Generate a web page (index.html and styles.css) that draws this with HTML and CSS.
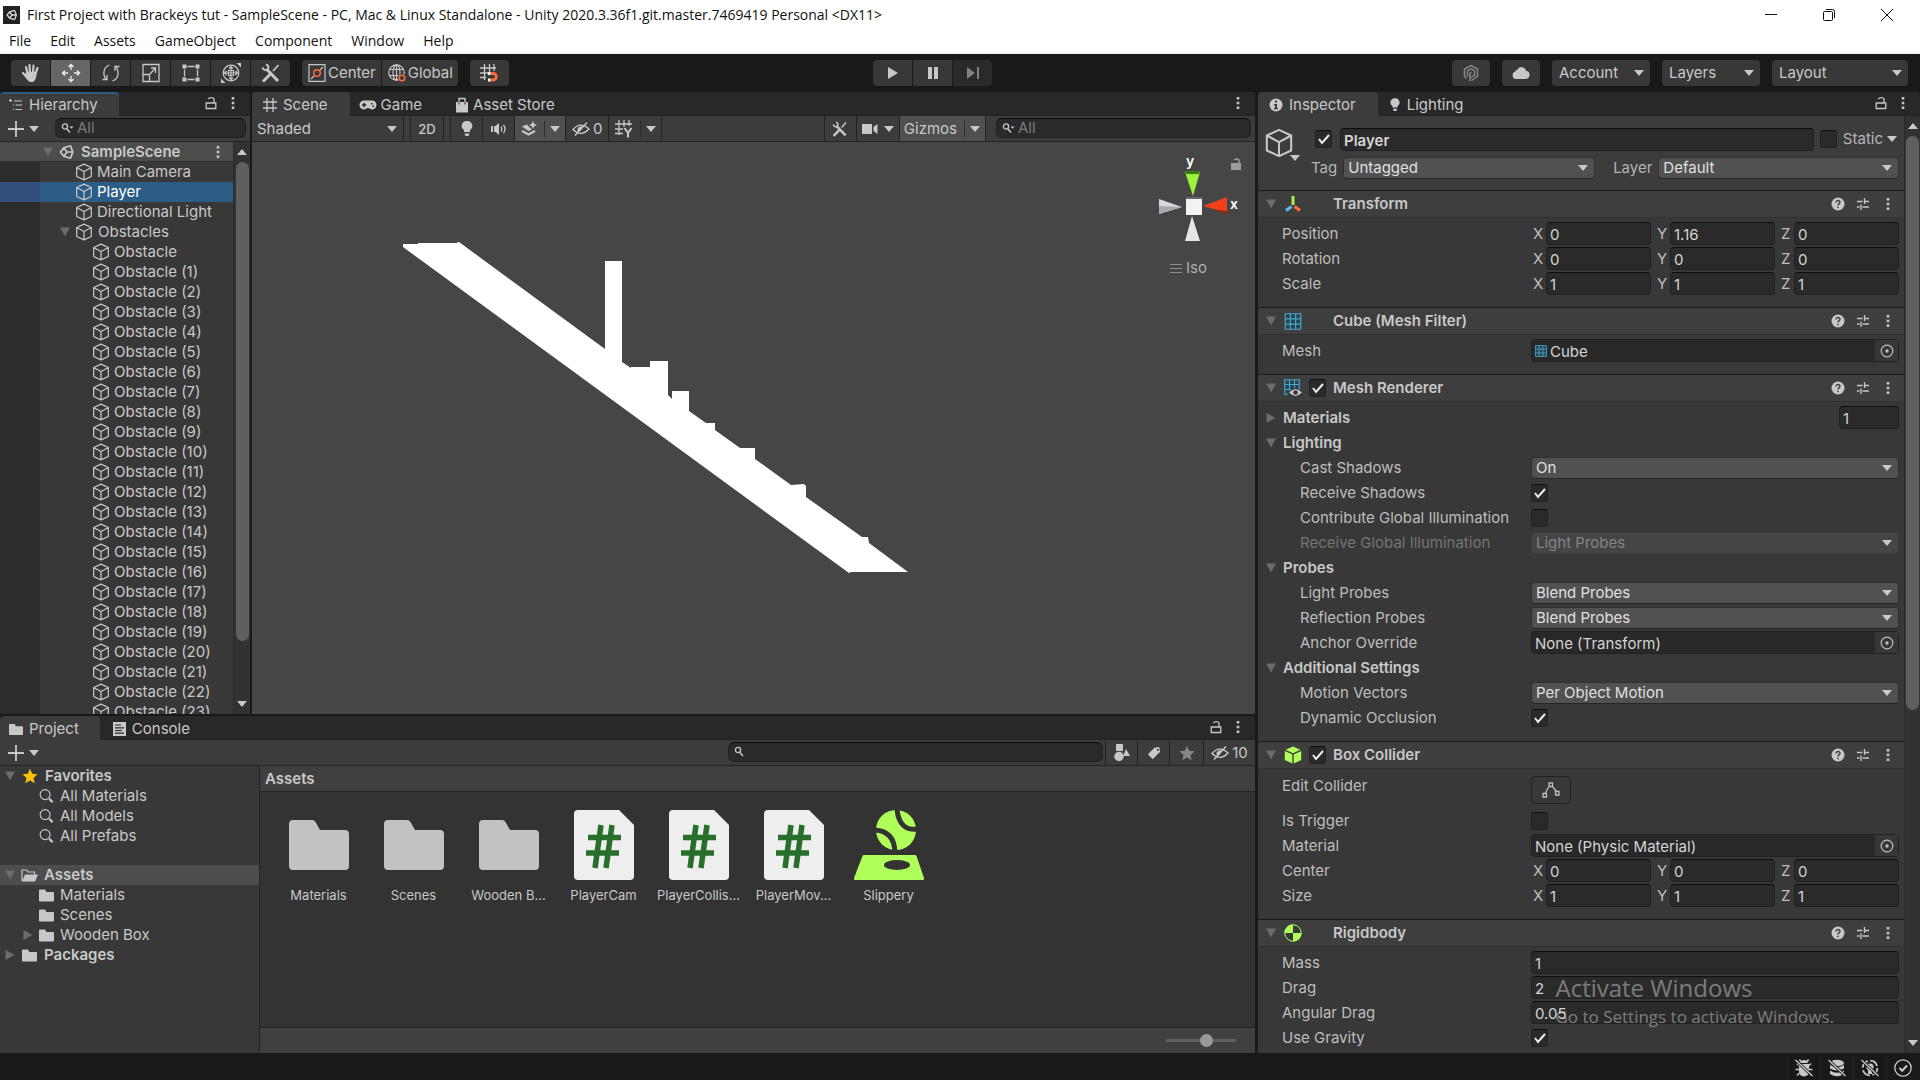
FILE: index.html
```html
<!DOCTYPE html>
<html lang="en">
<head>
    <meta charset="UTF-8">
    <meta name="viewport" content="width=device-width, initial-scale=1.0">
    <title>First Project with Brackeys tut - SampleScene</title>
    <link rel="stylesheet" href="styles.css">
</head>
<body>

    <!-- Icon set -->
    <svg class="defs" aria-hidden="true">
        <symbol id="i-unity" viewBox="0 0 16 16"><path fill="none" stroke="currentColor" stroke-width="1.700" d="M11.500 1.800 4.800 3.700 1.500 8l3.300 4.300 6.700 1.900M11.500 1.800 13.800 8l-2.300 6.200M8 8h5.500M8 8 4.800 3.700M8 8l-3.200 4.300"/></symbol>
        <symbol id="i-cube" viewBox="0 0 16 16"><path fill="none" stroke="currentColor" stroke-width="1.100" stroke-linejoin="round" d="M8 1 14.500 4v8L8 15 1.500 12V4zM1.500 4 8 7.500 14.500 4M8 7.500V15"/></symbol>
        <symbol id="i-hand" viewBox="0 0 20 20"><path fill="none" stroke="currentColor" stroke-width="2.200" stroke-linecap="round" d="M6.500 10 5 4M9 9.500 8.500 2M12 9.500 12.500 2.500M14.500 10.500 16.500 5M5.500 14 2 10"/><path fill="currentColor" d="M5.500 9h10.200c0 5-1.200 9-4 10H8.800C6 17 4.800 15 3.500 12z"/></symbol>
        <symbol id="i-move" viewBox="0 0 20 20"><path fill="none" stroke="currentColor" stroke-width="1.300" d="M10 1.500V7M10 13v5.500M1.500 10H7M13 10h5.500M7.500 4 10 1.500 12.500 4M7.500 16l2.500 2.500 2.500-2.500M4 7.500 1.500 10 4 12.500M16 7.500l2.500 2.500-2.500 2.500"/></symbol>
        <symbol id="i-rotate" viewBox="0 0 20 20"><path fill="none" stroke="currentColor" stroke-width="1.300" d="M8.500 2C3 4 1 10 5 16.500M1.500 16.500H6V12M11.500 18c5.500-2 7.500-8 3.500-14.500M18.500 3.500H14V8"/></symbol>
        <symbol id="i-scale" viewBox="0 0 20 20"><path fill="none" stroke="currentColor" stroke-width="1.300" d="M2 1.500h16v17H2zM2 11.500h6.500v7M9 11l5.500-6M10 5h4.500v5"/></symbol>
        <symbol id="i-rect" viewBox="0 0 20 20"><path fill="none" stroke="currentColor" stroke-width="1.300" d="M6.500 3.500h7M6.500 16.500h7M3.500 6.500v7M16.500 6.500v7"/><path fill="currentColor" d="M1.500 1.500h4v4h-4zM14.500 1.500h4v4h-4zM1.500 14.500h4v4h-4zM14.500 14.500h4v4h-4z"/></symbol>
        <symbol id="i-multi" viewBox="0 0 20 20"><circle cx="10" cy="10" r="7.800" fill="none" stroke="currentColor" stroke-width="1.200"/><path fill="none" stroke="currentColor" stroke-width="1.200" d="M10 3.500v13M3.500 10h13M8 5.500l2-2 2 2M8 14.500l2 2 2-2M5.500 8l-2 2 2 2M14.500 8l2 2-2 2M7.500 7.500h5v5h-5z"/><path fill="currentColor" d="M15.500 0H20v4.500zM0 15.500V20h4.500z"/></symbol>
        <symbol id="i-tools" viewBox="0 0 20 20"><path fill="none" stroke="currentColor" stroke-width="3" d="m5.500 6 11.500 12M9 11.500 2 18.500"/><path fill="none" stroke="currentColor" stroke-width="1.800" d="m12 8 5.500-6"/><path fill="none" stroke="currentColor" stroke-width="2" d="M1.500 4.500c1 3 4.500 3.500 5.500 1.500s0-4-2-4.500"/></symbol>
        <symbol id="i-pivot" viewBox="0 0 18 18"><path fill="none" stroke="currentColor" stroke-width="1.200" d="M1 .7h16v16.600H1zM3 15l3-3M12 6l3-3"/><circle cx="9" cy="9" r="3.300" fill="none" stroke="#ff6c3c" stroke-width="1.500"/></symbol>
        <symbol id="i-global" viewBox="0 0 18 18"><g fill="none" stroke="currentColor" stroke-width="1.200"><circle cx="8.500" cy="8.500" r="7.700"/><ellipse cx="8.500" cy="8.500" rx="3.500" ry="7.700"/><path d="M1.500 5.500h14M1.500 11.500h14M8.500 1v15"/></g><circle cx="14" cy="14" r="4" fill="#383838"/><circle cx="14" cy="14" r="2.800" fill="none" stroke="#ff6c3c" stroke-width="1.500"/></symbol>
        <symbol id="i-snap" viewBox="0 0 18 18"><path fill="none" stroke="currentColor" stroke-width="1.300" d="M4.500 0v16M9.500 0v9M14 0v7M0 4h16M0 9h8M0 13.500h6"/><path fill="none" stroke="#ff6c3c" stroke-width="2.800" d="M10.500 9.500h3a3.300 3.300 0 0 1 0 6.500h-3"/><path stroke="#fff" stroke-width="2.800" d="M8 9.500h2.500M8 16h2.500"/></symbol>
        <symbol id="i-play" viewBox="0 0 14 14"><path fill="currentColor" d="M2 1v12l10-6z"/></symbol>
        <symbol id="i-pause" viewBox="0 0 14 14"><path fill="currentColor" d="M2 1h4v12H2zM8 1h4v12H8z"/></symbol>
        <symbol id="i-step" viewBox="0 0 14 14"><path fill="currentColor" d="M1 1v12l8-6zM11 1h2v12h-2z"/></symbol>
        <symbol id="i-collab" viewBox="0 0 18 18"><path fill="none" stroke="currentColor" stroke-width="1.500" d="M4.500 14.500 2.500 12V5L9 1.500 15.500 5v7L9.500 16.500M5.500 12.500V6.800l3.500-2 3.500 2V11L9 13.500M8 17V9l1.500-1"/></symbol>
        <symbol id="i-cloud" viewBox="0 0 18 14"><path fill="currentColor" d="M4 13a3.800 3.800 0 0 1-.8-7.400A3.500 3.500 0 0 1 5.500 3.500 4.600 4.600 0 0 1 14 4.700 4.200 4.200 0 0 1 14 13z"/></symbol>
        <symbol id="i-list" viewBox="0 0 14 14"><path fill="none" stroke="currentColor" stroke-width="1.200" d="M0 2.500h3M5 3h8M4 7h1M6.500 7H13M4 11.500h1M6.500 11.500H13M1.500 1v3"/></symbol>
        <symbol id="i-lock" viewBox="0 0 12 14"><path fill="none" stroke="currentColor" stroke-width="1.300" d="M1.200 7h9.600v5.500H1.200zM9 7V3.200C9 1 3.500 1 3.500 3.200"/></symbol>
        <symbol id="i-dots" viewBox="0 0 4 14"><path fill="currentColor" d="M.7 1h2.600v2.600H.7zM.7 5.700h2.600v2.600H.7zM.7 10.400h2.600V13H.7z"/></symbol>
        <symbol id="i-grid" viewBox="0 0 14 14"><path fill="none" stroke="currentColor" stroke-width="1.300" d="M4 0v14M10 0v14M0 4h14M0 10h14"/></symbol>
        <symbol id="i-game" viewBox="0 0 18 12"><path fill="currentColor" fill-rule="evenodd" d="M5 1.500h8a4.500 4.500 0 0 1 0 9c-1.500 0-2.500-1.500-4-1.500s-2.500 1.500-4 1.500a4.500 4.500 0 0 1 0-9zM4.400 3.800v1.500H3v1.400h1.400v1.500h1.400V6.700h1.400V5.300H5.800V3.800zM12 4h1.500v1.500H12zM13.500 6.500H15V8h-1.500z"/></symbol>
        <symbol id="i-bag" viewBox="0 0 14 16"><path fill="currentColor" d="M1 5h12v10.500H1z"/><path fill="none" stroke="currentColor" stroke-width="1.400" d="M4 5V1.500h6V5"/><path fill="none" stroke="#282828" d="M4 5v2.500M10 5v2.500"/></symbol>
        <symbol id="i-plus" viewBox="0 0 16 16"><path fill="none" stroke="currentColor" stroke-width="1.800" d="M8 0v16M0 8h16"/></symbol>
        <symbol id="i-down" viewBox="0 0 10 6"><path fill="currentColor" d="M0 0h10L5 6z"/></symbol>
        <symbol id="i-up" viewBox="0 0 10 6"><path fill="currentColor" d="M0 6h10L5 0z"/></symbol>
        <symbol id="i-open" viewBox="0 0 10 10"><path fill="currentColor" d="M0 .5h10L5 9.500z"/></symbol>
        <symbol id="i-closed" viewBox="0 0 10 10"><path fill="currentColor" d="M.5 0v10l9-5z"/></symbol>
        <symbol id="i-find" viewBox="0 0 14 12"><circle cx="4" cy="4" r="2.600" fill="none" stroke="currentColor" stroke-width="1.300"/><path stroke="currentColor" stroke-width="1.500" d="m6 6.500 3 3.500"/></symbol>
        <symbol id="i-find-drop" viewBox="0 0 14 12"><circle cx="4" cy="4.500" r="2.600" fill="none" stroke="currentColor" stroke-width="1.300"/><path stroke="currentColor" stroke-width="1.500" d="m6 7 3 3.500"/><path fill="currentColor" d="M8.500 4.500h4l-2 2.200z"/></symbol>
        <symbol id="i-bulb" viewBox="0 0 14 16"><path fill="currentColor" d="M7 0a5 5 0 0 1 3 9.200V11H4V9.200A5 5 0 0 1 7 0zM4.500 12.500h5L8.500 15h-3z"/></symbol>
        <symbol id="i-sound" viewBox="0 0 16 14"><path fill="currentColor" d="M0 4h2v6H0zM3 4h1.500L8 1v12L4.500 10H3z"/><path fill="none" stroke="currentColor" stroke-width="1.300" d="M10 4.500q1.500 2.500 0 5M12.500 3q3 4 0 8"/></symbol>
        <symbol id="i-fx" viewBox="0 0 16 16"><path fill="currentColor" d="M12 0l1.200 2.800L16 4l-2.800 1.200L12 8l-1.200-2.800L8 4l2.800-1.200zM1 5.500l5-2 1.500 2L11 8.500 7.500 10z"/><path fill="none" stroke="currentColor" stroke-width="2" d="m1 10 6.500 3.500 6.500-3.500"/></symbol>
        <symbol id="i-hidden" viewBox="0 0 18 14"><path fill="none" stroke="currentColor" stroke-width="1.400" d="M1 7.500Q8.500-1 17 7 9 15.500 1 7.500zM3 13.500 15 .5"/><path fill="currentColor" d="M6 6a3.500 3.500 0 0 1 5-1L7 10.500A3.500 3.500 0 0 1 6 6z"/></symbol>
        <symbol id="i-gridy" viewBox="0 0 18 18"><path fill="none" stroke="currentColor" stroke-width="1.300" d="M4 0v15M9 0v7M14 0v6M0 4h17M0 9h8M0 13.500h8"/><path fill="none" stroke="currentColor" stroke-width="2" d="m9.500 8 3.500 5 3.500-5M13 12v5.500"/></symbol>
        <symbol id="i-camera" viewBox="0 0 16 12"><path fill="currentColor" d="M0 1h10v10H0zM11.500 4 15.500 1v10l-4-3z"/></symbol>
        <symbol id="i-info" viewBox="0 0 14 14"><circle cx="7" cy="7" r="6.500" fill="currentColor"/><path fill="#3c3c3c" d="M6 2.500h2v2H6zM5 6h3v4h1v1.300H5V10h1V7.200H5z"/></symbol>
        <symbol id="i-help" viewBox="0 0 14 14"><circle cx="7" cy="7" r="6.500" fill="currentColor"/><path fill="none" stroke="#3e3e3e" stroke-width="1.500" d="M5 5.500C5 2.700 9.300 3 9 5.300 8.900 6.500 7 6.800 7 8.500M7 9.700v1.600"/></symbol>
        <symbol id="i-preset" viewBox="0 0 14 14"><path fill="none" stroke="currentColor" stroke-width="1.300" d="M1 4.500h5.500M9 4.500h4M8.500 1v6M1 10h2.500M6.500 10H13M5 7.500V13"/></symbol>
        <symbol id="i-transform" viewBox="0 0 18 18"><path fill="none" stroke="#a6f24c" stroke-width="3" d="M9 1v9"/><path fill="none" stroke="#5fb8ea" stroke-width="3.200" d="m7.500 11.500-5.500 4"/><path fill="none" stroke="#ff6c3c" stroke-width="3.200" d="m10.500 11.500 5.500 4"/></symbol>
        <symbol id="i-mesh" viewBox="0 0 16 16"><path fill="#234653" d="M1 1h14v14H1z"/><path fill="none" stroke="#4fa6c9" stroke-width="1.100" d="M.7.700h14.600v14.600H.7zM5.500 1v14M10.500 1v14M1 5.500h14M1 10.500h14"/></symbol>
        <symbol id="i-render" viewBox="0 0 18 18"><path fill="#234653" d="M1 1h14v14H1z"/><path fill="none" stroke="#4fa6c9" stroke-width="1.100" d="M.7.700h14.600v14.600H.7zM5.500 1v14M10.500 1v14M1 5.500h14M1 10.500h14"/><path fill="#383838" d="M4 13.500Q11 4 18 13.500v4.500H4z"/><path fill="#c4c4c4" d="M5 13.500Q11.500 6.500 18 13.500q-6.500 7-13 0z"/><circle cx="11.500" cy="13.500" r="2.300" fill="#383838"/></symbol>
        <symbol id="i-box" viewBox="0 0 18 18"><path fill="#b0fe59" d="m9 .5 7.500 3.300L9 7.200 1.500 3.800zM.8 5l7.500 3.500v9L.8 14zM17.200 5 9.700 8.500v9l7.500-3.500z"/></symbol>
        <symbol id="i-rigid" viewBox="0 0 18 18"><circle cx="9" cy="9" r="8.200" fill="#383838" stroke="#b0fe59"/><path fill="#b0fe59" d="M9 9V.5A8.500 8.500 0 0 0 .5 9zM9 9v8.500A8.500 8.500 0 0 0 17.500 9z"/></symbol>
        <symbol id="i-edit" viewBox="0 0 18 16"><path fill="none" stroke="currentColor" stroke-width="1.300" d="M7 1h3.500v3.500H7zM1 11.500h3.500V15H1zM13.500 9.500H17V13h-3.500zM3 11.500 7 4.500M10.500 4.500 14.500 9.500"/></symbol>
        <symbol id="i-target" viewBox="0 0 14 14"><circle cx="7" cy="7" r="5.800" fill="none" stroke="currentColor" stroke-width="1.200"/><circle cx="7" cy="7" r="1.700" fill="currentColor"/></symbol>
        <symbol id="i-folder" viewBox="0 0 15 13"><path fill="currentColor" d="M0 1.500Q0 .5 1 .5h4.500q.8 0 1.200 1L7.200 3H14q1 0 1 1v7.500q0 1-1 1H1q-1 0-1-1z"/></symbol>
        <symbol id="i-folder-open" viewBox="0 0 17 13"><path fill="none" stroke="currentColor" stroke-width="1.200" d="M1 12V1h4.500L7 3h6.500v2.500"/><path fill="currentColor" d="M4 5.500h13L14 12.500H1z"/></symbol>
        <symbol id="i-console" viewBox="0 0 13 14"><path fill="currentColor" d="M0 0h13v14H0z"/><path stroke="#282828" stroke-width="1.200" d="M2 3h6M2 5.800h9M2 8.500h7M2 11.200h9"/></symbol>
        <symbol id="i-star" viewBox="0 0 16 16"><path fill="currentColor" d="m8 .8 2.200 5 5.300.5-4 3.600 1.200 5.300L8 12.400l-4.700 2.800 1.200-5.300-4-3.600 5.300-.5z"/></symbol>
        <symbol id="i-search" viewBox="0 0 16 16"><circle cx="6.500" cy="6.500" r="5.300" fill="none" stroke="currentColor" stroke-width="1.200"/><path stroke="currentColor" stroke-width="2.400" d="m11 11 3.500 3.700"/></symbol>
        <symbol id="i-types" viewBox="0 0 16 18"><path fill="currentColor" d="M2 0h7v7H2z"/><circle cx="5" cy="12.500" r="4.700" fill="currentColor"/><path fill="currentColor" d="M12 5l4 7H9z"/></symbol>
        <symbol id="i-tag" viewBox="0 0 16 16"><path fill="currentColor" fill-rule="evenodd" d="M8.500 2 14 1l1 5.500-8.500 8.500L1 9.500zM11.500 3.500v2h2v-2z"/></symbol>
        <symbol id="i-bigfolder" viewBox="0 0 70 70"><path fill="#c2c2c2" d="M5 14q0-4 4-4h19q2.500 0 3.500 2l4.500 8H61q4 0 4 4v32q0 4-4 4H9q-4 0-4-4z"/></symbol>
        <symbol id="i-script" viewBox="0 0 70 70"><path fill="#eee" d="M5 4q0-4 4-4h41l15 15v51q0 4-4 4H9q-4 0-4-4z"/><path fill="none" stroke="#276f2b" stroke-width="5.500" d="m32 15-6 43M43 15l-6 43M19 27.500h33M17 43h33"/></symbol>
        <symbol id="i-physic" viewBox="0 0 70 70"><circle cx="42" cy="20" r="20" fill="#b0fe59"/><path fill="none" stroke="#333" stroke-width="5" d="M43-1q2 23 22 20M21 20q19 1 20 22"/><path fill="#b0fe59" d="M10 45h51q1 0 1.500 1L70 68q.5 2-1.500 2h-67Q-.5 70 0 68l8.500-22q.500-1 1.500-1z"/><ellipse cx="43" cy="55" rx="13" ry="5" fill="#333"/></symbol>
        <symbol id="i-bug" viewBox="0 0 18 18"><path fill="currentColor" d="M5.500 4a3.500 3 0 0 1 7 0zM4 5h10v7q0 5-5 5.500-5-.5-5-5.500z"/><path fill="none" stroke="currentColor" stroke-width="1.500" d="M4.500 7 2 4.500M4 10.500H.5M4.500 14 2 16.500M13.500 7 16 4.500M14 10.500h3.500M13.500 14l2.500 2.500M6 3 4.500.5M12 3l1.500-2.500"/><path stroke="#191919" stroke-width="3" d="m.5 1 17 16"/><path stroke="currentColor" stroke-width="1.300" d="m.5 1 17 16"/></symbol>
        <symbol id="i-cache" viewBox="0 0 18 18"><ellipse cx="9" cy="4" rx="7" ry="3.300" fill="currentColor"/><path fill="currentColor" d="M2 6q7 4.500 14 0v3.500q-7 4-14 0zM2 11.500q7 4.500 14 0V15q-7 4.500-14 0z"/><path stroke="#191919" stroke-width="3" d="m.5 1 17 16"/><path stroke="currentColor" stroke-width="1.300" d="m.5 1 17 16"/></symbol>
        <symbol id="i-autolight" viewBox="0 0 18 18"><circle cx="9" cy="9" r="7.300" fill="none" stroke="currentColor" stroke-width="1.800" stroke-dasharray="9 2.500"/><circle cx="9" cy="8" r="3.600" fill="currentColor"/><path fill="currentColor" d="M7 11h4v4H7z"/><path stroke="#191919" stroke-width="3" d="m.5 1 17 16"/><path stroke="currentColor" stroke-width="1.300" d="m.5 1 17 16"/></symbol>
        <symbol id="i-ok" viewBox="0 0 18 18"><circle cx="9" cy="9" r="8.200" fill="none" stroke="currentColor" stroke-width="1.300"/><path fill="none" stroke="currentColor" stroke-width="2" d="m5.500 9 2.700 2.700L13 6.500"/></symbol>
    </svg>

    <!-- Window title and menus -->
    <header class="window">
        <div class="titlebar">
            <span class="app-icon"><svg width="12" height="12"><use href="#i-unity"/></svg></span>
            <h1>First Project with Brackeys tut - SampleScene - PC, Mac &amp; Linux Standalone - Unity 2020.3.36f1.git.master.7469419 Personal &lt;DX11&gt;</h1>
            <div class="window-buttons">
                <button aria-label="Minimize"><svg width="14" height="14"><path d="M1 6.500h12"/></svg></button>
                <button aria-label="Restore"><svg width="14" height="14"><path d="M1.500 4.500q0-1 1-1h7q1 0 1 1v7q0 1-1 1h-7q-1 0-1-1zM4 1.500h6.500q2 0 2 2V10"/></svg></button>
                <button aria-label="Close"><svg width="14" height="14"><path d="m1 1 12 12M13 1 1 13"/></svg></button>
            </div>
        </div>
        <nav class="menubar">
            <button>File</button>
            <button>Edit</button>
            <button>Assets</button>
            <button>GameObject</button>
            <button>Component</button>
            <button>Window</button>
            <button>Help</button>
        </nav>
    </header>

    <!-- Main toolbar -->
    <div class="toolbar">
        <div class="toolbar-left">
            <div class="button-group tools">
                <button aria-label="Hand"><svg width="20" height="20"><use href="#i-hand"/></svg></button>
                <button aria-label="Move" class="active"><svg width="20" height="20"><use href="#i-move"/></svg></button>
                <button aria-label="Rotate"><svg width="20" height="20"><use href="#i-rotate"/></svg></button>
                <button aria-label="Scale"><svg width="20" height="20"><use href="#i-scale"/></svg></button>
                <button aria-label="Rect"><svg width="20" height="20"><use href="#i-rect"/></svg></button>
                <button aria-label="Transform"><svg width="20" height="20"><use href="#i-multi"/></svg></button>
                <button aria-label="Custom tools"><svg width="20" height="20"><use href="#i-tools"/></svg></button>
            </div>
            <div class="button-group pivots">
                <button><svg width="18" height="18"><use href="#i-pivot"/></svg>Center</button>
                <button><svg width="18" height="18"><use href="#i-global"/></svg>Global</button>
            </div>
            <div class="button-group tools">
                <button aria-label="Grid snapping"><svg width="18" height="18"><use href="#i-snap"/></svg></button>
            </div>
        </div>
        <div class="button-group tools">
            <button aria-label="Play"><svg width="14" height="14"><use href="#i-play"/></svg></button>
            <button aria-label="Pause"><svg width="14" height="14"><use href="#i-pause"/></svg></button>
            <button aria-label="Step" disabled><svg width="14" height="14"><use href="#i-step"/></svg></button>
        </div>
        <div class="toolbar-right">
            <button class="service dim" aria-label="Collab"><svg width="18" height="18"><use href="#i-collab"/></svg></button>
            <button class="service" aria-label="Cloud"><svg width="18" height="14"><use href="#i-cloud"/></svg></button>
            <select class="drop" aria-label="Account"><option>Account</option></select>
            <select class="drop" aria-label="Layers"><option>Layers</option></select>
            <select class="drop layout" aria-label="Layout"><option>Layout</option></select>
        </div>
    </div>

    <main class="editor">

        <!-- Hierarchy -->
        <section class="panel hierarchy">
            <div class="tabs">
                <button class="tab current focused"><svg width="14" height="14"><use href="#i-list"/></svg>Hierarchy</button>
                <div class="tab-icons">
                    <button aria-label="Lock"><svg width="12" height="14"><use href="#i-lock"/></svg></button>
                    <button aria-label="Options"><svg width="4" height="14"><use href="#i-dots"/></svg></button>
                </div>
            </div>
            <div class="bar">
                <button class="add" aria-label="Create"><svg width="16" height="16"><use href="#i-plus"/></svg><svg width="10" height="6"><use href="#i-down"/></svg></button>
                <label class="search"><svg width="14" height="12"><use href="#i-find-drop"/></svg><input type="text" placeholder="All" aria-label="Search hierarchy"></label>
            </div>
            <div class="scroll-area">
                <ul class="tree scene-tree">
                    <li class="scene-row"><svg class="fold" width="10" height="10"><use href="#i-open"/></svg><svg width="16" height="16"><use href="#i-unity"/></svg><b>SampleScene</b><svg class="end" width="4" height="14"><use href="#i-dots"/></svg></li>
                    <li><svg width="18" height="18"><use href="#i-cube"/></svg>Main Camera</li>
                    <li class="selected"><svg width="18" height="18"><use href="#i-cube"/></svg>Player</li>
                    <li><svg width="18" height="18"><use href="#i-cube"/></svg>Directional Light</li>
                    <li class="parent"><svg class="fold" width="10" height="10"><use href="#i-open"/></svg><svg width="18" height="18"><use href="#i-cube"/></svg>Obstacles</li>
                    <li class="child"><svg width="18" height="18"><use href="#i-cube"/></svg>Obstacle</li>
                    <li class="child"><svg width="18" height="18"><use href="#i-cube"/></svg>Obstacle (1)</li>
                    <li class="child"><svg width="18" height="18"><use href="#i-cube"/></svg>Obstacle (2)</li>
                    <li class="child"><svg width="18" height="18"><use href="#i-cube"/></svg>Obstacle (3)</li>
                    <li class="child"><svg width="18" height="18"><use href="#i-cube"/></svg>Obstacle (4)</li>
                    <li class="child"><svg width="18" height="18"><use href="#i-cube"/></svg>Obstacle (5)</li>
                    <li class="child"><svg width="18" height="18"><use href="#i-cube"/></svg>Obstacle (6)</li>
                    <li class="child"><svg width="18" height="18"><use href="#i-cube"/></svg>Obstacle (7)</li>
                    <li class="child"><svg width="18" height="18"><use href="#i-cube"/></svg>Obstacle (8)</li>
                    <li class="child"><svg width="18" height="18"><use href="#i-cube"/></svg>Obstacle (9)</li>
                    <li class="child"><svg width="18" height="18"><use href="#i-cube"/></svg>Obstacle (10)</li>
                    <li class="child"><svg width="18" height="18"><use href="#i-cube"/></svg>Obstacle (11)</li>
                    <li class="child"><svg width="18" height="18"><use href="#i-cube"/></svg>Obstacle (12)</li>
                    <li class="child"><svg width="18" height="18"><use href="#i-cube"/></svg>Obstacle (13)</li>
                    <li class="child"><svg width="18" height="18"><use href="#i-cube"/></svg>Obstacle (14)</li>
                    <li class="child"><svg width="18" height="18"><use href="#i-cube"/></svg>Obstacle (15)</li>
                    <li class="child"><svg width="18" height="18"><use href="#i-cube"/></svg>Obstacle (16)</li>
                    <li class="child"><svg width="18" height="18"><use href="#i-cube"/></svg>Obstacle (17)</li>
                    <li class="child"><svg width="18" height="18"><use href="#i-cube"/></svg>Obstacle (18)</li>
                    <li class="child"><svg width="18" height="18"><use href="#i-cube"/></svg>Obstacle (19)</li>
                    <li class="child"><svg width="18" height="18"><use href="#i-cube"/></svg>Obstacle (20)</li>
                    <li class="child"><svg width="18" height="18"><use href="#i-cube"/></svg>Obstacle (21)</li>
                    <li class="child"><svg width="18" height="18"><use href="#i-cube"/></svg>Obstacle (22)</li>
                    <li class="child"><svg width="18" height="18"><use href="#i-cube"/></svg>Obstacle (23)</li>
                </ul>
                <div class="scrollbar">
                    <svg width="10" height="6"><use href="#i-up"/></svg>
                    <div class="track"><div class="thumb"></div></div>
                    <svg width="10" height="6"><use href="#i-down"/></svg>
                </div>
            </div>
        </section>

        <!-- Scene view -->
        <section class="panel scene">
            <div class="tabs">
                <button class="tab current"><svg width="14" height="14"><use href="#i-grid"/></svg>Scene</button>
                <button class="tab"><svg width="18" height="12"><use href="#i-game"/></svg>Game</button>
                <button class="tab"><svg width="14" height="16"><use href="#i-bag"/></svg>Asset Store</button>
                <div class="tab-icons">
                    <button aria-label="Options"><svg width="4" height="14"><use href="#i-dots"/></svg></button>
                </div>
            </div>
            <div class="bar scene-bar">
                <select class="shading" aria-label="Draw mode"><option>Shaded</option></select>
                <button class="cell mode">2D</button>
                <button class="cell" aria-label="Scene lighting"><svg width="14" height="16"><use href="#i-bulb"/></svg></button>
                <button class="cell" aria-label="Scene audio"><svg width="16" height="14"><use href="#i-sound"/></svg></button>
                <button class="cell split active" aria-label="Effects"><svg width="16" height="16"><use href="#i-fx"/></svg><svg class="arrow" width="10" height="6"><use href="#i-down"/></svg></button>
                <button class="cell hidden-count"><svg width="18" height="14"><use href="#i-hidden"/></svg>0</button>
                <button class="cell split" aria-label="Grid"><svg width="18" height="18"><use href="#i-gridy"/></svg><svg class="arrow" width="10" height="6"><use href="#i-down"/></svg></button>
                <span class="space"></span>
                <button class="cell" aria-label="Component tools"><svg width="16" height="16"><use href="#i-tools"/></svg></button>
                <button class="cell camera" aria-label="Camera"><svg width="16" height="12"><use href="#i-camera"/></svg><svg width="10" height="6"><use href="#i-down"/></svg></button>
                <button class="cell split gizmos active">Gizmos<svg class="arrow" width="10" height="6"><use href="#i-down"/></svg></button>
                <label class="search"><svg width="14" height="12"><use href="#i-find-drop"/></svg><input type="text" placeholder="All" aria-label="Search scene"></label>
            </div>
            <div class="viewport">
                <svg class="level" viewBox="0 0 1003 572">
                    <path fill="#fff" d="M151 102h15v-1h38l3-1 146 107v-88h17v101l9 6v-1h19v-6h18v34l4 4v-8h17v20l17 12h9v7l25 18h15v11l36 26 13-1 2 2v11l56 40h6l1 6 39 29h-57l-2 1L151 105z"/>
                </svg>
                <div class="gizmo">
                    <svg width="100" height="94" viewBox="1150 150 100 94">
                        <g class="axis-names"><text x="1186" y="166">y</text><text x="1230" y="209">x</text></g>
                        <path fill="#9af23c" d="M1185 172h15l-7 24z"/>
                        <path fill="#3c7a18" d="M1185 171h15l-1 3h-13z"/>
                        <path fill="#d8d8dc" d="M1159 199v15l23-7z"/>
                        <path fill="#a9a9b0" d="M1159 206v8l23-7z"/>
                        <path fill="#f0411c" d="M1227 197v16l-24-7z"/>
                        <path fill="#9c2008" d="M1228 209v5l-17-5 16 2z"/>
                        <path fill="#e6e6e8" d="M1192 216l8 25h-15z"/>
                        <path fill="#66666e" d="M1186 197h16v2h-16z"/>
                        <path fill="#f2f2f2" d="M1186 199h16v16h-16z"/>
                        <path fill="#9c9c9c" d="M1231 163h10v7h-10z"/>
                        <path fill="none" stroke="#9c9c9c" stroke-width="1.500" d="M1239 163v-3q-2-2-5 0"/>
                    </svg>
                    <button class="projection"><svg width="12" height="10"><path stroke="#8c8c8c" stroke-width="1" d="M0 1.500h12M0 5.500h12M0 9.500h12"/></svg>Iso</button>
                </div>
            </div>
        </section>

        <!-- Project browser -->
        <section class="panel project">
            <div class="tabs">
                <button class="tab current"><svg width="14" height="13"><use href="#i-folder"/></svg>Project</button>
                <button class="tab"><svg width="13" height="14"><use href="#i-console"/></svg>Console</button>
                <div class="tab-icons">
                    <button aria-label="Lock"><svg width="12" height="14"><use href="#i-lock"/></svg></button>
                    <button aria-label="Options"><svg width="4" height="14"><use href="#i-dots"/></svg></button>
                </div>
            </div>
            <div class="bar project-bar">
                <button class="add" aria-label="Create"><svg width="16" height="16"><use href="#i-plus"/></svg><svg width="10" height="6"><use href="#i-down"/></svg></button>
                <label class="search"><svg width="14" height="12"><use href="#i-find"/></svg><input type="text" aria-label="Search project"></label>
                <button class="cell" aria-label="Search by type"><svg width="16" height="18"><use href="#i-types"/></svg></button>
                <button class="cell" aria-label="Search by label"><svg width="14" height="14"><use href="#i-tag"/></svg></button>
                <button class="cell dim" aria-label="Save search"><svg width="16" height="16"><use href="#i-star"/></svg></button>
                <button class="cell hidden-count"><svg width="18" height="14"><use href="#i-hidden"/></svg>10</button>
            </div>
            <div class="project-body">
                <ul class="tree folders">
                    <li><svg class="fold" width="10" height="10"><use href="#i-open"/></svg><svg class="fav" width="16" height="16"><use href="#i-star"/></svg><b>Favorites</b></li>
                    <li class="sub"><svg width="15" height="16"><use href="#i-search"/></svg>All Materials</li>
                    <li class="sub"><svg width="15" height="16"><use href="#i-search"/></svg>All Models</li>
                    <li class="sub"><svg width="15" height="16"><use href="#i-search"/></svg>All Prefabs</li>
                    <li class="root"><svg class="fold" width="10" height="10"><use href="#i-open"/></svg><svg width="17" height="13"><use href="#i-folder-open"/></svg><b>Assets</b></li>
                    <li class="sub"><svg width="15" height="13"><use href="#i-folder"/></svg>Materials</li>
                    <li class="sub"><svg width="15" height="13"><use href="#i-folder"/></svg>Scenes</li>
                    <li class="sub foldable"><svg class="fold" width="10" height="10"><use href="#i-closed"/></svg><svg width="15" height="13"><use href="#i-folder"/></svg>Wooden Box</li>
                    <li><svg class="fold" width="10" height="10"><use href="#i-closed"/></svg><svg width="15" height="13"><use href="#i-folder"/></svg><b>Packages</b></li>
                </ul>
                <div class="browser">
                    <h2>Assets</h2>
                    <ul class="assets">
                        <li><svg width="70" height="70"><use href="#i-bigfolder"/></svg>Materials</li>
                        <li><svg width="70" height="70"><use href="#i-bigfolder"/></svg>Scenes</li>
                        <li><svg width="70" height="70"><use href="#i-bigfolder"/></svg>Wooden B...</li>
                        <li><svg width="70" height="70"><use href="#i-script"/></svg>PlayerCam</li>
                        <li><svg width="70" height="70"><use href="#i-script"/></svg>PlayerCollis...</li>
                        <li><svg width="70" height="70"><use href="#i-script"/></svg>PlayerMov...</li>
                        <li><svg width="70" height="70"><use href="#i-physic"/></svg>Slippery</li>
                    </ul>
                    <footer><input type="range" min="0" max="100" value="60" aria-label="Icon size"></footer>
                </div>
            </div>
        </section>

        <!-- Inspector -->
        <section class="panel inspector">
            <div class="tabs">
                <button class="tab current"><svg width="14" height="14"><use href="#i-info"/></svg>Inspector</button>
                <button class="tab"><svg width="12" height="16"><use href="#i-bulb"/></svg>Lighting</button>
                <div class="tab-icons">
                    <button aria-label="Lock"><svg width="12" height="14"><use href="#i-lock"/></svg></button>
                    <button aria-label="Options"><svg width="4" height="14"><use href="#i-dots"/></svg></button>
                </div>
            </div>
            <div class="scroll-area">
                <div class="components">
                    <div class="object-head">
                        <button class="object-icon" aria-label="Select icon"><svg width="30" height="30"><use href="#i-cube"/></svg><svg class="corner" width="10" height="6"><use href="#i-down"/></svg></button>
                        <div class="object-rows">
                            <div class="object-row">
                                <input type="checkbox" aria-label="Enabled" checked>
                                <input type="text" class="object-name" value="Player" aria-label="Name">
                                <input type="checkbox" id="static">
                                <label for="static">Static</label><svg width="10" height="6"><use href="#i-down"/></svg>
                            </div>
                            <div class="object-row tag-row">
                                <label for="tag">Tag</label>
                                <select id="tag" class="tag-select"><option>Untagged</option></select>
                                <label for="layer">Layer</label>
                                <select id="layer" class="layer-select"><option>Default</option></select>
                            </div>
                        </div>
                    </div>

                    <article class="component">
                        <header><svg class="fold" width="10" height="10"><use href="#i-open"/></svg><svg width="18" height="18"><use href="#i-transform"/></svg><h3>Transform</h3>
                            <button aria-label="Help"><svg width="14" height="14"><use href="#i-help"/></svg></button><button aria-label="Presets"><svg width="14" height="14"><use href="#i-preset"/></svg></button><button aria-label="More"><svg width="4" height="14"><use href="#i-dots"/></svg></button></header>
                        <div class="row"><span>Position</span>
                            <div class="vector"><label>X<input type="text" value="0"></label><label>Y<input type="text" value="1.16"></label><label>Z<input type="text" value="0"></label></div></div>
                        <div class="row"><span>Rotation</span>
                            <div class="vector"><label>X<input type="text" value="0"></label><label>Y<input type="text" value="0"></label><label>Z<input type="text" value="0"></label></div></div>
                        <div class="row"><span>Scale</span>
                            <div class="vector"><label>X<input type="text" value="1"></label><label>Y<input type="text" value="1"></label><label>Z<input type="text" value="1"></label></div></div>
                    </article>

                    <article class="component">
                        <header><svg class="fold" width="10" height="10"><use href="#i-open"/></svg><svg width="18" height="17"><use href="#i-mesh"/></svg><h3>Cube (Mesh Filter)</h3>
                            <button aria-label="Help"><svg width="14" height="14"><use href="#i-help"/></svg></button><button aria-label="Presets"><svg width="14" height="14"><use href="#i-preset"/></svg></button><button aria-label="More"><svg width="4" height="14"><use href="#i-dots"/></svg></button></header>
                        <div class="row"><label for="mesh">Mesh</label>
                            <div class="object-field"><svg width="12" height="12"><use href="#i-mesh"/></svg><input type="text" id="mesh" value="Cube" readonly><button aria-label="Pick mesh"><svg width="14" height="14"><use href="#i-target"/></svg></button></div></div>
                    </article>

                    <article class="component">
                        <header><svg class="fold" width="10" height="10"><use href="#i-open"/></svg><svg width="18" height="18"><use href="#i-render"/></svg><input type="checkbox" aria-label="Mesh Renderer enabled" checked><h3>Mesh Renderer</h3>
                            <button aria-label="Help"><svg width="14" height="14"><use href="#i-help"/></svg></button><button aria-label="Presets"><svg width="14" height="14"><use href="#i-preset"/></svg></button><button aria-label="More"><svg width="4" height="14"><use href="#i-dots"/></svg></button></header>
                        <div class="row group"><svg class="fold" width="10" height="10"><use href="#i-closed"/></svg><label for="materials">Materials</label><input type="text" id="materials" class="count" value="1"></div>
                        <div class="row group"><svg class="fold" width="10" height="10"><use href="#i-open"/></svg><span>Lighting</span></div>
                        <div class="row nested"><label for="cast">Cast Shadows</label><select id="cast"><option>On</option></select></div>
                        <div class="row nested"><label for="receive">Receive Shadows</label><input type="checkbox" id="receive" checked></div>
                        <div class="row nested"><label for="contribute">Contribute Global Illumination</label><input type="checkbox" id="contribute"></div>
                        <div class="row nested off"><label for="gi">Receive Global Illumination</label><select id="gi" disabled><option>Light Probes</option></select></div>
                        <div class="row group"><svg class="fold" width="10" height="10"><use href="#i-open"/></svg><span>Probes</span></div>
                        <div class="row nested"><label for="light-probes">Light Probes</label><select id="light-probes"><option>Blend Probes</option></select></div>
                        <div class="row nested"><label for="reflection">Reflection Probes</label><select id="reflection"><option>Blend Probes</option></select></div>
                        <div class="row nested"><label for="anchor">Anchor Override</label>
                            <div class="object-field"><input type="text" id="anchor" value="None (Transform)" readonly><button aria-label="Pick transform"><svg width="14" height="14"><use href="#i-target"/></svg></button></div></div>
                        <div class="row group"><svg class="fold" width="10" height="10"><use href="#i-open"/></svg><span>Additional Settings</span></div>
                        <div class="row nested"><label for="motion">Motion Vectors</label><select id="motion"><option>Per Object Motion</option></select></div>
                        <div class="row nested"><label for="occlusion">Dynamic Occlusion</label><input type="checkbox" id="occlusion" checked></div>
                    </article>

                    <article class="component">
                        <header><svg class="fold" width="10" height="10"><use href="#i-open"/></svg><svg width="18" height="18"><use href="#i-box"/></svg><input type="checkbox" aria-label="Box Collider enabled" checked><h3>Box Collider</h3>
                            <button aria-label="Help"><svg width="14" height="14"><use href="#i-help"/></svg></button><button aria-label="Presets"><svg width="14" height="14"><use href="#i-preset"/></svg></button><button aria-label="More"><svg width="4" height="14"><use href="#i-dots"/></svg></button></header>
                        <div class="row edit-row"><label for="edit">Edit Collider</label><button id="edit" class="edit"><svg width="18" height="16"><use href="#i-edit"/></svg></button></div>
                        <div class="row"><label for="trigger">Is Trigger</label><input type="checkbox" id="trigger"></div>
                        <div class="row"><label for="material">Material</label>
                            <div class="object-field"><input type="text" id="material" value="None (Physic Material)" readonly><button aria-label="Pick material"><svg width="14" height="14"><use href="#i-target"/></svg></button></div></div>
                        <div class="row"><span>Center</span>
                            <div class="vector"><label>X<input type="text" value="0"></label><label>Y<input type="text" value="0"></label><label>Z<input type="text" value="0"></label></div></div>
                        <div class="row"><span>Size</span>
                            <div class="vector"><label>X<input type="text" value="1"></label><label>Y<input type="text" value="1"></label><label>Z<input type="text" value="1"></label></div></div>
                    </article>

                    <article class="component">
                        <header><svg class="fold" width="10" height="10"><use href="#i-open"/></svg><svg width="18" height="18"><use href="#i-rigid"/></svg><h3>Rigidbody</h3>
                            <button aria-label="Help"><svg width="14" height="14"><use href="#i-help"/></svg></button><button aria-label="Presets"><svg width="14" height="14"><use href="#i-preset"/></svg></button><button aria-label="More"><svg width="4" height="14"><use href="#i-dots"/></svg></button></header>
                        <div class="row"><label for="mass">Mass</label><input type="text" id="mass" value="1"></div>
                        <div class="row"><label for="drag">Drag</label><input type="text" id="drag" value="2"></div>
                        <div class="row"><label for="angular">Angular Drag</label><input type="text" id="angular" value="0.05"></div>
                        <div class="row"><label for="gravity">Use Gravity</label><input type="checkbox" id="gravity" checked></div>
                    </article>
                </div>
                <div class="scrollbar">
                    <svg width="10" height="6"><use href="#i-up"/></svg>
                    <div class="track"><div class="thumb"></div></div>
                    <svg width="10" height="6"><use href="#i-down"/></svg>
                </div>
            </div>
        </section>
    </main>

    <!-- Status bar -->
    <footer class="status">
        <button aria-label="Debug mode"><svg width="18" height="18"><use href="#i-bug"/></svg></button>
        <button aria-label="Cache server"><svg width="18" height="18"><use href="#i-cache"/></svg></button>
        <button aria-label="Auto generate lighting"><svg width="18" height="18"><use href="#i-autolight"/></svg></button>
        <button aria-label="Background tasks"><svg width="18" height="18"><use href="#i-ok"/></svg></button>
    </footer>

    <div class="watermark">
        <p class="watermark-title">Activate Windows</p>
        <p>Go to Settings to activate Windows.</p>
    </div>

</body>
</html>
```
FILE: styles.css
```css
* {
    box-sizing: border-box;
}

body {
    margin: 0;
    height: 100vh;
    display: flex;
    flex-direction: column;
    overflow: hidden;
    background: #191919;
    color: #c8c8c8;
    font: 15px/20px Inter, "Liberation Sans", sans-serif;
}

h1, h2, h3, p, ul {
    margin: 0;
    padding: 0;
    font-size: inherit;
    list-style: none;
}

button, input, select {
    margin: 0;
    padding: 0;
    border: 0;
    background: none;
    color: inherit;
    font: inherit;
    border-radius: 0;
}

button {
    display: flex;
    align-items: center;
    justify-content: center;
}

svg {
    flex: none;
}

.defs {
    position: absolute;
    width: 0;
    height: 0;
}

/* Window frame */
.window {
    background: #fff;
    color: #111;
    border-bottom: 2px solid #f0f0f0;
    font-family: "Open Sans", sans-serif;
    font-size: 14px;
}

.titlebar {
    display: flex;
    align-items: center;
    height: 29px;
    padding-left: 3px;
}

.titlebar h1 {
    flex: 1;
    font-weight: normal;
    margin-left: 7px;
}

.app-icon {
    display: flex;
    align-items: center;
    justify-content: center;
    width: 17px;
    height: 18px;
    background: #222;
    color: #ddd;
}

.window-buttons {
    display: flex;
    margin-right: 4px;
}

.window-buttons button {
    width: 58px;
    height: 28px;
}

.window-buttons svg {
    fill: none;
    stroke: #111;
}

.menubar {
    display: flex;
    gap: 1px;
    height: 23px;
}

.menubar button {
    padding: 0 9px;
}

/* Main toolbar */
.toolbar {
    display: flex;
    align-items: flex-start;
    height: 38px;
    padding: 6px 12px 0 11px;
}

.toolbar-left,
.toolbar-right {
    display: flex;
    flex: 16 1 0;
    gap: 12px;
}

.toolbar-right {
    flex-grow: 17;
    justify-content: flex-end;
}

.button-group {
    display: flex;
    gap: 1px;
    border-radius: 4px;
    overflow: hidden;
}

.button-group button,
.service {
    height: 26px;
    background: #383838;
}

.tools button {
    width: 39px;
}

.button-group .active {
    background: #666;
    color: #eee;
}

.button-group button:disabled {
    background: #2a2a2a;
    color: #808080;
}

.pivots button {
    gap: 2px;
    padding: 0 5px 0 6px;
}

.service {
    width: 38px;
    border-radius: 4px;
}

.dim {
    color: #868686;
}

/* Drop-downs and fields */
select {
    appearance: none;
    width: 100%;
    min-width: 0;
    height: 22px;
    padding: 0 20px 2px 4px;
    border: 1px solid #303030;
    border-bottom-color: #242424;
    border-radius: 4px;
    color: #e0e0e0;
    background: #515151 url("data:image/svg+xml,%3Csvg xmlns='http://www.w3.org/2000/svg' width='10' height='6'%3E%3Cpath fill='%23c8c8c8' d='M0 0h10L5 6z'/%3E%3C/svg%3E") no-repeat right 6px center;
}

select:disabled {
    opacity: 1;
    color: #848484;
    background-color: #454545;
    border-color: #3c3c3c;
}

.drop {
    width: 98px;
    height: 26px;
    padding: 0 20px 0 7px;
    border: 0;
    color: inherit;
    background-color: #383838;
}

.layout {
    width: 136px;
}

input[type="text"] {
    width: 100%;
    min-width: 0;
    height: 23px;
    padding: 2px 3px 0;
    border: 1px solid #212121;
    border-top-color: #0d0d0d;
    border-radius: 4px;
    background: #2a2a2a;
    color: #d4d4d4;
}

input[type="checkbox"] {
    appearance: none;
    flex: none;
    width: 17px;
    height: 18px;
    border: 1px solid #212121;
    border-top-color: #0d0d0d;
    border-radius: 3px;
    background: #2a2a2a;
}

input[type="checkbox"]:checked {
    background: #2a2a2a url("data:image/svg+xml,%3Csvg xmlns='http://www.w3.org/2000/svg' width='12' height='12'%3E%3Cpath fill='none' stroke='%23eee' stroke-width='2' d='m1 6 3 4 7-8'/%3E%3C/svg%3E") no-repeat center;
}

/* Docked panels */
.editor {
    flex: 1;
    min-height: 0;
    display: grid;
    grid-template-columns: 250px minmax(0, 1fr) 663px;
    grid-template-rows: minmax(0, 1fr) 337px;
    grid-template-areas:
        "hierarchy scene inspector"
        "project project inspector";
    gap: 2px;
}

.panel {
    display: flex;
    flex-direction: column;
    min-height: 0;
    background: #383838;
    border-radius: 4px 4px 0 0;
    overflow: hidden;
}

.hierarchy { grid-area: hierarchy; }
.scene { grid-area: scene; }
.project { grid-area: project; }
.inspector { grid-area: inspector; margin-left: 1px; }

.tabs {
    display: flex;
    flex: none;
    height: 24px;
    background: #282828;
    border-bottom: 1px solid #232323;
}

.tab {
    height: 24px;
    padding: 2px 21px 0 9px;
    gap: 6px;
    color: #c8c8c8;
}

.tab + .tab {
    padding-left: 13px;
}

.current {
    background: #3c3c3c;
    border-radius: 4px 4px 0 0;
}

.focused {
    padding-top: 0;
    border-top: 2px solid #2c5d87;
}

.scene .tab, .inspector .tab {
    padding: 2px 22px 0 11px;
}

.scene .tab + .tab {
    padding: 2px 24px 0 9px;
    gap: 4px;
}

.tab-icons {
    display: flex;
    align-items: center;
    gap: 14px;
    margin-left: auto;
    padding: 0 15px 2px 0;
}

.bar {
    display: flex;
    flex: none;
    align-items: stretch;
    height: 26px;
    background: #3c3c3c;
    border-bottom: 1px solid #232323;
}

.add {
    gap: 5px;
    margin: 0 16px 0 8px;
}

.search {
    display: flex;
    flex: 1;
    align-items: center;
    height: 20px;
    margin: 2px 4px 0 0;
    padding-left: 5px;
    gap: 2px;
    border: 1px solid #212121;
    border-top-color: #0d0d0d;
    border-radius: 6px;
    background: #2a2a2a;
}

.search input[type="text"] {
    height: 18px;
    padding: 0;
    border: 0;
    background: none;
}

.search input::placeholder {
    color: #7a7a7a;
}

.cell {
    flex: none;
    min-width: 32px;
    border-left: 1px solid #232323;
}

.cell.active {
    background: #505050;
}

.split {
    justify-content: space-between;
    padding-left: 6px;
}

.arrow {
    box-sizing: content-box;
    padding: 5px;
    border-left: 1px solid #2c2c2c;
}

.split .arrow {
    margin-left: 7px;
}

.scene-bar .shading {
    width: 152px;
    height: 25px;
    margin-right: 6px;
    padding: 0 20px 0 5px;
    border: 0;
    border-right: 1px solid #232323;
    border-radius: 0;
    color: #c8c8c8;
    background-color: transparent;
}

.cell.mode {
    width: 34px;
    margin-right: 6px;
    border-right: 1px solid #232323;
    font-size: 13px;
    font-weight: 500;
}

.scene-bar .search {
    flex: 0 1 255px;
}

.hidden-count {
    gap: 3px;
    padding: 0 6px;
}

.space {
    flex: 1;
    border-left: 1px solid #232323;
}

.camera {
    gap: 6px;
    padding: 0 5px;
}

.gizmos {
    padding-left: 4px;
    border-right: 1px solid #232323;
    margin-right: 10px;
}

/* Scroll areas */
.scroll-area {
    display: flex;
    flex: 1;
    min-height: 0;
}

.scrollbar {
    display: flex;
    flex-direction: column;
    align-items: center;
    width: 17px;
    padding: 7px 0;
    gap: 7px;
    border-left: 1px solid #2c2c2c;
    background: #323232;
}

.track {
    flex: 1;
    width: 13px;
}

.thumb {
    height: 90%;
    border-radius: 7px;
    background: #5f5f5f;
}

.inspector .scrollbar {
    width: 16px;
}

.inspector .thumb {
    height: 64%;
}

.tree li {
    display: flex;
    align-items: center;
    height: 20px;
    gap: 4px;
    padding-left: 5px;
    white-space: nowrap;
}

.fold {
    color: #6b6b6b;
}

/* Hierarchy */
.scene-tree {
    flex: 1;
    overflow: hidden;
    background: linear-gradient(90deg, #2d2d2d 40px, transparent 40px);
}

.tree.scene-tree li {
    padding-left: 75px;
}

.tree.scene-tree .scene-row {
    padding: 0 13px 0 43px;
    gap: 6px;
    background: #4d4d4d;
    border-bottom: 1px solid #303030;
}

.tree.scene-tree .parent {
    padding-left: 60px;
    gap: 5px;
}

.tree.scene-tree .child {
    padding-left: 92px;
}

.scene-tree .selected {
    color: #fff;
    background: linear-gradient(90deg, #324e7b 40px, #2c5d87 40px);
}

.selected svg {
    color: #c8c8c8;
}

.end {
    margin-left: auto;
}

b, h2, h3 {
    font-weight: 600;
}

/* Scene view */
.viewport {
    position: relative;
    flex: 1;
    min-height: 0;
    background: #464646;
}

.level {
    display: block;
    width: 100%;
    height: 100%;
}

.gizmo {
    position: absolute;
    top: 8px;
    right: 5px;
}

.axis-names {
    fill: #fff;
    font-size: 14px;
    font-weight: 600;
}

.projection {
    margin: 9px 0 0 20px;
    gap: 4px;
    color: #b0b0b0;
}

/* Project browser */
.project-bar {
    justify-content: flex-end;
}

.project-bar .add {
    margin-right: auto;
}

.project-bar .search {
    flex: 0 1 375px;
    margin-right: 2px;
}

.project-bar .dim {
    width: 34px;
}

.project-bar .hidden-count {
    width: 52px;
}

.project-body {
    display: flex;
    flex: 1;
    min-height: 0;
}

.folders {
    width: 260px;
    border-right: 1px solid #232323;
}

.tree.folders li {
    gap: 7px;
}

.tree.folders .sub {
    padding-left: 39px;
    gap: 6px;
}

.tree.folders .foldable {
    padding-left: 23px;
}

.tree.folders .root {
    margin-top: 19px;
    gap: 6px;
    background: #4d4d4d;
}

.folders .fav {
    color: #ffc107;
}

.browser {
    display: flex;
    flex: 1;
    flex-direction: column;
    min-width: 0;
    background: #333;
}

.browser h2 {
    height: 26px;
    padding: 3px 0 0 5px;
    background: #404040;
    border-bottom: 1px solid #232323;
}

.assets {
    display: flex;
    flex: 1;
    flex-wrap: wrap;
    align-content: flex-start;
    padding: 18px 11px;
}

.assets li {
    display: flex;
    flex-direction: column;
    align-items: center;
    width: 95px;
    gap: 5px;
    font-size: 13px;
}

.browser footer {
    display: flex;
    align-items: center;
    justify-content: flex-end;
    height: 26px;
    padding-right: 19px;
    background: #404040;
    border-top: 1px solid #232323;
}

input[type="range"] {
    appearance: none;
    width: 70px;
    height: 13px;
}

input[type="range"]::-webkit-slider-runnable-track {
    height: 3px;
    background: #5e5e5e;
}

input[type="range"]::-webkit-slider-thumb {
    appearance: none;
    width: 13px;
    height: 13px;
    margin-top: -5px;
    border-radius: 50%;
    background: #999;
}

/* Inspector */
.components {
    flex: 1;
    min-width: 0;
    overflow: hidden;
}

.object-head {
    display: flex;
    height: 74px;
    padding: 11px 5px 0 4px;
    background: #3c3c3c;
}

.object-icon {
    position: relative;
    width: 34px;
    height: 32px;
}

.corner {
    position: absolute;
    right: -4px;
    bottom: -2px;
}

.object-rows {
    flex: 1;
    padding-left: 15px;
}

.object-row {
    display: flex;
    align-items: center;
    gap: 6px;
    height: 24px;
    padding-left: 4px;
    color: #b4b4b4;
}

.object-row svg {
    margin: 0 2px 0 -2px;
    color: #c8c8c8;
}

.object-row .object-name {
    flex: 1;
    margin-left: 2px;
    font-weight: 600;
}

.tag-row {
    margin-top: 5px;
    padding-left: 0;
}

.tag-select {
    flex: 20 1 0;
    margin-right: 12px;
}

.layer-select {
    flex: 19 1 0;
}

.component {
    padding-bottom: 11px;
}

.component header {
    display: flex;
    align-items: center;
    height: 28px;
    margin-bottom: 3px;
    padding: 0 14px 0 8px;
    gap: 8px;
    background: #3e3e3e;
    border-top: 1px solid #1a1a1a;
    border-bottom: 1px solid #303030;
}

.component header svg + h3 {
    margin-left: 23px;
}

.component h3 {
    flex: 1;
}

.component header input[type="checkbox"] {
    margin: 0 -1px;
}

.component header button + button {
    margin-left: 3px;
}

.component header button:last-child {
    margin-left: 8px;
}

.row {
    display: grid;
    grid-template-columns: 249px minmax(0, 1fr);
    align-items: center;
    height: 25px;
    padding: 0 5px 0 24px;
    color: #bebebe;
}

.nested {
    grid-template-columns: 231px minmax(0, 1fr);
    padding-left: 42px;
}

.off {
    color: #747474;
}

.group {
    display: flex;
    gap: 7px;
    padding-left: 8px;
    color: #c8c8c8;
    font-weight: 600;
}

.row .count {
    width: 60px;
    margin-left: auto;
    font-weight: normal;
}

.edit-row {
    align-items: start;
    height: 36px;
    padding-top: 4px;
}

.edit {
    width: 40px;
    height: 28px;
    border: 1px solid #222;
    border-radius: 4px;
}

.vector {
    display: grid;
    grid-template-columns: repeat(3, minmax(0, 1fr));
    gap: 6px;
    padding-left: 2px;
}

.vector label {
    display: grid;
    grid-template-columns: 13px minmax(0, 1fr);
    align-items: center;
}

.object-field {
    display: flex;
    align-items: center;
    height: 23px;
    padding-left: 3px;
    border: 1px solid #212121;
    border-radius: 4px;
    background: #282828;
}

.object-field svg + input[type="text"] {
    padding-left: 3px;
}

.object-field input[type="text"] {
    flex: 1;
    height: 21px;
    padding-left: 0;
    border: 0;
    background: none;
}

.object-field button {
    width: 23px;
    height: 21px;
    background: #373737;
}

/* Status bar */
.status {
    display: flex;
    justify-content: flex-end;
    align-items: center;
    height: 27px;
    padding: 2px 1px 0 0;
}

.status button {
    width: 33px;
    height: 24px;
    border-left: 1px solid #262626;
}

/* Windows activation notice, drawn over the editor */
.watermark {
    position: absolute;
    right: 86px;
    bottom: 51px;
    font-family: "Open Sans", sans-serif;
    font-size: 17px;
    line-height: 24px;
    color: rgba(255, 255, 255, 0.4);
    pointer-events: none;
}

.watermark-title {
    font-size: 24px;
    line-height: 34px;
}
```
